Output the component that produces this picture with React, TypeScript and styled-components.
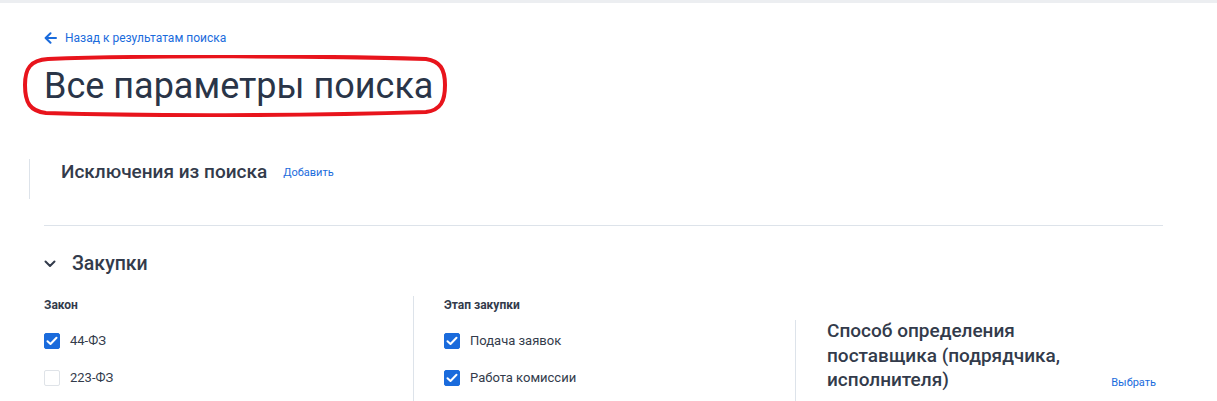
import React from "react";
import styled, { createGlobalStyle } from "styled-components";

const GlobalStyle = createGlobalStyle`
  html, body {
    margin: 0;
    padding: 0;
    background: #ffffff;
    font-family: Roboto, "Liberation Sans", sans-serif;
  }
`;

const Page = styled.div`
  border-top: 3px solid #eceef1;
  padding: 26px 54px 0 44px;
  overflow: hidden;
  height: 372px;
`;

const BackLink = styled.a`
  display: inline-flex;
  align-items: center;
  gap: 8px;
  color: #1a6bdc;
  font-size: 12px;
  line-height: 16px;
  text-decoration: none;
  cursor: pointer;
`;

const TitleWrap = styled.div`
  position: relative;
  margin-top: 12px;
  height: 52px;
`;

const Title = styled.h1`
  margin: 0;
  font-size: 36px;
  line-height: 52px;
  font-weight: 400;
  color: #2a3548;
`;

const Ellipse = styled.svg`
  position: absolute;
  left: -22px;
  top: -5px;
  width: 426px;
  height: 62px;
  pointer-events: none;
`;

const SideBlock = styled.div`
  display: flex;
  gap: 16px;
  border-left: 1px solid #dde3ea;
  padding-left: 31px;
`;

const Exclusions = styled(SideBlock)`
  margin: 47px 0 0 -15px;
  height: 40px;
  align-items: flex-start;
`;

const SubTitle = styled.h3`
  margin: 0;
  font-size: 19px;
  line-height: 25px;
  font-weight: 500;
  color: #333b4b;
`;

const SmallLink = styled.a`
  font-size: 11px;
  color: #1a6bdc;
  cursor: pointer;
  line-height: 14px;
`;

const AddLink = styled(SmallLink)`
  margin-top: 7px;
`;

const Divider = styled.hr`
  border: 0;
  border-top: 1px solid #dde3ea;
  margin: 26px 0 0;
`;

const SectionHead = styled.div`
  display: flex;
  align-items: center;
  gap: 16px;
  margin-top: 25px;
`;

const SectionTitle = styled.h2`
  margin: 0;
  font-size: 19.5px;
  line-height: 26px;
  font-weight: 500;
  color: #333b4b;
`;

const Columns = styled.div`
  display: grid;
  grid-template-columns: 369px 382px 1fr;
  margin-top: 19px;
`;

const Column = styled.div<{ $divided?: boolean }>`
  border-left: ${(p) => (p.$divided ? "1px solid #dde3ea" : "0")};
  padding-left: ${(p) => (p.$divided ? "30px" : "0")};
  min-height: 110px;
`;

const ColLabel = styled.div`
  font-size: 12px;
  font-weight: 700;
  color: #333b4b;
  line-height: 16px;
  padding-top: 1px;
`;

const OptionList = styled.div`
  display: flex;
  flex-direction: column;
  gap: 21px;
  margin-top: 20px;
`;

const Option = styled.label`
  display: flex;
  align-items: center;
  gap: 10px;
  font-size: 13px;
  color: #333b4b;
  line-height: 16px;
  cursor: pointer;
`;

const Box = styled.span<{ $checked?: boolean }>`
  width: 16px;
  height: 16px;
  box-sizing: border-box;
  border-radius: 2px;
  display: inline-flex;
  align-items: center;
  justify-content: center;
  background: ${(p) => (p.$checked ? "#1a6bdc" : "#fff")};
  border: 1px solid ${(p) => (p.$checked ? "#1a6bdc" : "#dfe3e8")};
`;

const MethodBlock = styled(SideBlock)`
  margin-top: 24px;
  justify-content: space-between;
  align-items: flex-start;
  padding-right: 7px;
  min-height: 86px;
`;

const MethodTitle = styled(SubTitle)`
  max-width: 250px;
  margin-top: -1px;
  line-height: 24.5px;
`;

const PickLink = styled(SmallLink)`
  margin-top: 56px;
`;

const Check = ({ checked }: { checked?: boolean }) => (
  <Box $checked={checked}>
    {checked && (
      <svg width="12" height="10" viewBox="0 0 12 10">
        <path d="M1.5 5.2 L4.5 8 L10.5 1.8" fill="none" stroke="#fff" strokeWidth="2" strokeLinecap="round" strokeLinejoin="round" />
      </svg>
    )}
  </Box>
);

export default function App() {
  return (
    <>
      <GlobalStyle />
      <Page>
        <BackLink>
          <svg width="13" height="12" viewBox="0 0 13 12">
            <path d="M12 6 H2 M6.5 1.2 L1.6 6 L6.5 10.8" fill="none" stroke="#1a6bdc" strokeWidth="2" strokeLinecap="round" strokeLinejoin="round" />
          </svg>
          Назад к результатам поиска
        </BackLink>
        <TitleWrap>
          <Title>Все параметры поиска</Title>
          <Ellipse viewBox="0 0 426 62">
            <path
              d="M26 4 C110 1 270 0 404 4 C418 6 423 14 423 30 C423 46 419 55 404 57 C280 61 120 61 24 58 C8 56 3 48 3 30 C3 14 8 5 26 4 Z"
              fill="none"
              stroke="#e8141c"
              strokeWidth="4"
            />
          </Ellipse>
        </TitleWrap>
        <Exclusions>
          <SubTitle>Исключения из поиска</SubTitle>
          <AddLink>Добавить</AddLink>
        </Exclusions>
        <Divider />
        <SectionHead>
          <svg width="12" height="8" viewBox="0 0 12 8">
            <path d="M1.5 1.5 L6 6 L10.5 1.5" fill="none" stroke="#333b4b" strokeWidth="2" strokeLinecap="round" strokeLinejoin="round" />
          </svg>
          <SectionTitle>Закупки</SectionTitle>
        </SectionHead>
        <Columns>
          <Column>
            <ColLabel>Закон</ColLabel>
            <OptionList>
              <Option><Check checked />44-ФЗ</Option>
              <Option><Check />223-ФЗ</Option>
            </OptionList>
          </Column>
          <Column $divided>
            <ColLabel>Этап закупки</ColLabel>
            <OptionList>
              <Option><Check checked />Подача заявок</Option>
              <Option><Check checked />Работа комиссии</Option>
            </OptionList>
          </Column>
          <Column>
            <MethodBlock>
              <MethodTitle>Способ определения поставщика (подрядчика, исполнителя)</MethodTitle>
              <PickLink>Выбрать</PickLink>
            </MethodBlock>
          </Column>
        </Columns>
      </Page>
    </>
  );
}
